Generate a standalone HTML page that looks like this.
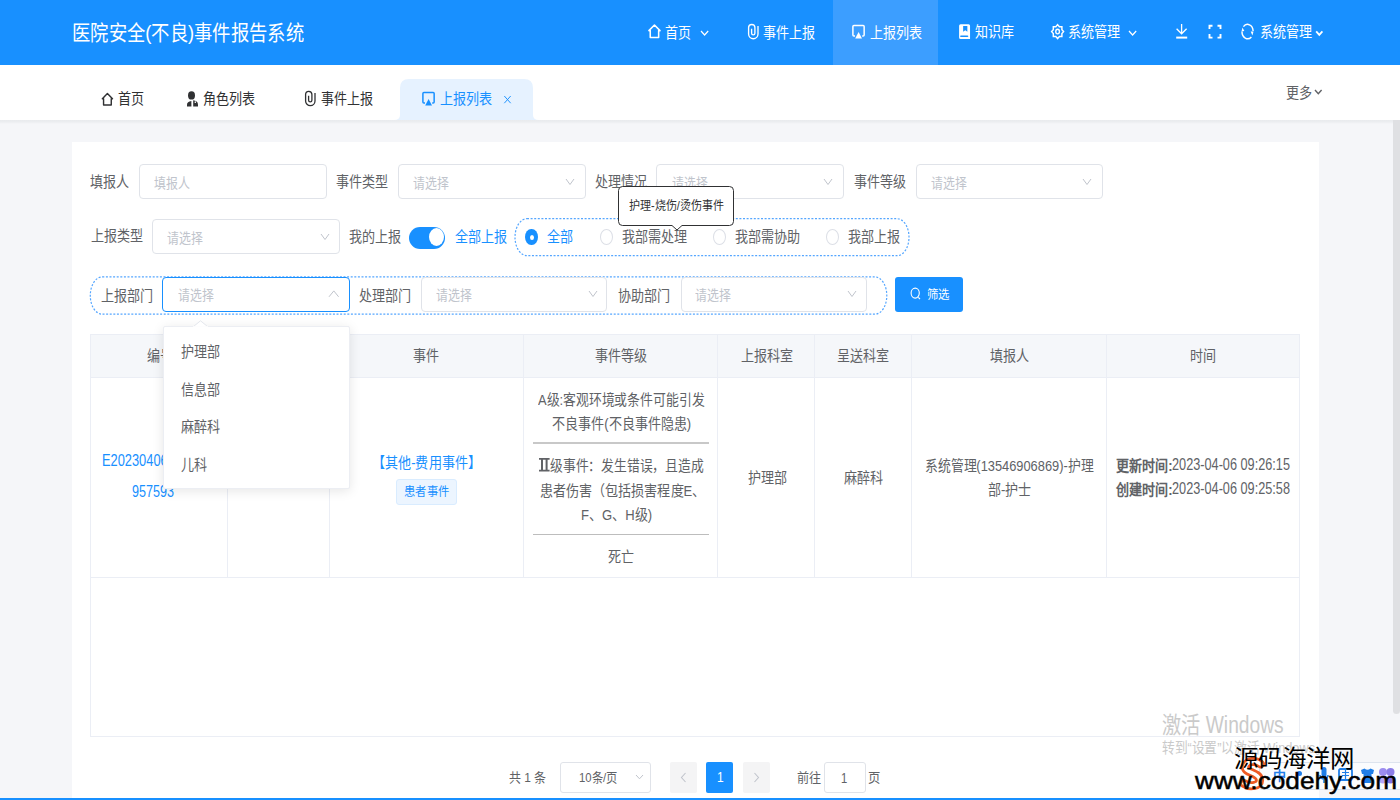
<!DOCTYPE html>
<html lang="zh-CN"><head><meta charset="utf-8">
<style>
*{box-sizing:border-box}
html,body{margin:0;padding:0}
body{width:1400px;height:800px;overflow:hidden;position:relative;background:#f5f6f9;font-family:"Liberation Sans",sans-serif}
.a{position:absolute}
.t{position:absolute;white-space:nowrap;transform:scaleX(.87);transform-origin:0 0;line-height:1;font-size:15px;color:#606266}
.l{position:absolute;white-space:nowrap;transform:scaleX(.8);transform-origin:0 0;line-height:1;font-size:15.5px;color:#606266}
.w{color:#fff}
.k{color:#303133}
.ph{color:#c0c4cc;font-size:14px;transform:scaleX(.85)!important}
.inp{position:absolute;background:#fff;border:1px solid #e0e3e9;border-radius:4px}
svg{position:absolute;overflow:visible}
</style></head><body>

<!-- ============ HEADER ============ -->
<div class="a" style="left:0;top:0;width:1400px;height:65px;background:#1890ff"></div>
<div class="a" style="left:833px;top:0;width:105px;height:65px;background:#3c9eff"></div>
<div class="t w" style="left:71.5px;top:22px;font-size:21px;transform:scaleX(.872)">医院安全(不良)事件报告系统</div>

<!-- nav: home -->
<svg style="left:642px;top:20px" width="24" height="24" viewBox="0 0 24 24"><path d="M8.25 17.5V10.6H6.9L12.45 5L18 10.6H16.65V17.5Z" fill="none" stroke="#fff" stroke-width="1.55" stroke-linejoin="round"/></svg>
<div class="t w" style="left:665px;top:25px">首页</div>
<svg style="left:699.5px;top:30.2px" width="10" height="7" viewBox="0 0 10 7"><path d="M1 1L4.6 5L8.2 1" fill="none" stroke="#fff" stroke-width="1.2"/></svg>
<svg style="left:742px;top:20px" width="24" height="24" viewBox="0 0 24 24"><path d="M16 6V14A4.7 4.7 0 0 1 6.6 14V7.6A3.15 3.15 0 0 1 12.9 7.6V13.2A1.65 1.65 0 0 1 9.6 13.2V8.7" fill="none" stroke="#fff" stroke-width="1.35"/></svg>
<div class="t w" style="left:763px;top:25px">事件上报</div>
<svg style="left:846px;top:20px" width="24" height="24" viewBox="0 0 24 24"><path d="M9 15.95H7.9A1 1 0 0 1 6.9 14.95V6.55A1 1 0 0 1 7.9 5.55H17.15A1 1 0 0 1 18.15 6.55V14.95A1 1 0 0 1 17.15 15.95H16.2" fill="none" stroke="#fff" stroke-width="1.5"/><path d="M12.6 12.1L16 18.4H9.2Z" fill="#fff"/></svg>
<div class="t w" style="left:869.5px;top:25px">上报列表</div>
<svg style="left:954px;top:20px" width="24" height="24" viewBox="0 0 24 24"><path d="M6.6 4.2H14.55A1.5 1.5 0 0 1 16.05 5.7V19.05H6.6A1.5 1.5 0 0 1 5.1 17.55V5.7A1.5 1.5 0 0 1 6.6 4.2Z" fill="#fff"/><path d="M9.15 5.9H13.35V11.7L11.25 10.3L9.15 11.7Z" fill="#1890ff"/><path d="M6.9 16.2H13.5" stroke="#1890ff" stroke-width="1.6" stroke-linecap="round"/></svg>
<div class="t w" style="left:974.5px;top:24px">知识库</div>
<svg style="left:1045px;top:20px" width="24" height="24" viewBox="0 0 24 24"><path d="M12.60 4.60 L14.36 6.65 L16.90 6.65 L16.90 9.62 L18.60 11.60 L16.90 13.58 L16.90 16.55 L14.36 16.55 L12.60 18.60 L10.84 16.55 L8.30 16.55 L8.30 13.58 L6.60 11.60 L8.30 9.62 L8.30 6.65 L10.84 6.65Z" fill="none" stroke="#fff" stroke-width="1.45" stroke-linejoin="miter"/><ellipse cx="12.6" cy="11.6" rx="1.85" ry="2.3" fill="none" stroke="#fff" stroke-width="1.4"/></svg>
<div class="t w" style="left:1068px;top:24px;transform:scaleX(.875)">系统管理</div>
<svg style="left:1128px;top:30px" width="10" height="7" viewBox="0 0 10 7"><path d="M1 1L4.6 5L8.2 1" fill="none" stroke="#fff" stroke-width="1.2"/></svg>
<svg style="left:1170px;top:20px" width="24" height="24" viewBox="0 0 24 24"><path d="M11.6 4V14M6.6 8.8L11.6 13.8L16.6 8.8" fill="none" stroke="#fff" stroke-width="1.3"/><path d="M6.2 17.6H17.2" stroke="#fff" stroke-width="2"/></svg>
<svg style="left:1197.5px;top:20px" width="24" height="24" viewBox="0 0 24 24"><path d="M39 9V5.8H42M47 5.8H50V9M50 14V17.6H47M42 17.6H39V14" fill="none" stroke="#fff" stroke-width="1.9" transform="translate(-27.5,0)"/></svg>
<svg style="left:1236px;top:20px" width="24" height="24" viewBox="0 0 24 24"><path d="M7.4 6.6A5.6 6.9 0 0 1 17.1 11" fill="none" stroke="#fff" stroke-width="1.45"/><path d="M15.4 16.9A5.6 6.9 0 0 1 6 11.6" fill="none" stroke="#fff" stroke-width="1.45"/><path d="M14.7 11.6L17.5 11.4L16.4 15.4Z" fill="#fff"/><path d="M5.5 11.5L8.3 11.1L6.5 7.5Z" fill="#fff"/></svg>
<div class="t w" style="left:1260px;top:24px">系统管理</div>
<svg style="left:1314.5px;top:29.5px" width="10" height="7" viewBox="0 0 10 7"><path d="M1.2 1.3L4.3 4.8L7.4 1.3" fill="none" stroke="#fff" stroke-width="1.8"/></svg>
<!-- ============ TAB BAR ============ -->
<div class="a" style="left:0;top:65px;width:1400px;height:55px;background:#fff"></div>
<div class="a" style="left:0;top:120px;width:1393px;height:4px;background:linear-gradient(#e9ebee,#eceef1 50%,#f5f6f9)"></div>
<svg style="left:95.5px;top:88.5px" width="22" height="22" viewBox="0 0 24 24"><path d="M8.25 17.5V10.6H6.9L12.45 5L18 10.6H16.65V17.5Z" fill="none" stroke="#303133" stroke-width="1.55" stroke-linejoin="round"/></svg>
<div class="t k" style="left:118px;top:91px">首页</div>
<svg style="left:180px;top:87px" width="24" height="24" viewBox="0 0 24 24"><ellipse cx="11.5" cy="8.4" rx="3.5" ry="4.2" fill="#303133"/><path d="M7 19.5V17.5C7 15.5 8.5 14.2 11.4 13.9V19.5Z" fill="#303133"/><path d="M13.2 13.3C16 13.6 18 15.2 18 17.5V19.5H13.2Z" fill="#303133"/><ellipse cx="15.3" cy="15.2" rx="0.7" ry="0.9" fill="#fff"/></svg>
<div class="t k" style="left:203px;top:91px">角色列表</div>
<svg style="left:299px;top:87.4px" width="24" height="24" viewBox="0 0 24 24"><path d="M16 6V14A4.7 4.7 0 0 1 6.6 14V7.6A3.15 3.15 0 0 1 12.9 7.6V13.2A1.65 1.65 0 0 1 9.6 13.2V8.7" fill="none" stroke="#303133" stroke-width="1.3"/></svg>
<div class="t k" style="left:321px;top:91px">事件上报</div>
<!-- active tab -->
<svg style="left:394px;top:79px" width="146" height="41" viewBox="0 0 146 41"><path d="M0 41Q6 41 6 36V9Q6 0 15 0H130Q139 0 139 9V36Q139 41 145 41Z" fill="#e6f2ff"/></svg>
<svg style="left:416.2px;top:87.3px" width="24" height="24" viewBox="0 0 24 24"><path d="M9 15.95H7.9A1 1 0 0 1 6.9 14.95V6.55A1 1 0 0 1 7.9 5.55H17.15A1 1 0 0 1 18.15 6.55V14.95A1 1 0 0 1 17.15 15.95H16.2" fill="none" stroke="#1890ff" stroke-width="1.5"/><path d="M12.6 12.1L16 18.4H9.2Z" fill="#1890ff"/></svg>
<div class="t" style="left:440px;top:91px;color:#1890ff">上报列表</div>
<svg style="left:503px;top:95px" width="9" height="9" viewBox="0 0 9 9"><path d="M1.3 1L7.7 8.2M7.7 1L1.3 8.2" stroke="#1890ff" stroke-width="0.95"/></svg>
<div class="t" style="left:1286px;top:85px">更多</div>
<svg style="left:1314px;top:89px" width="9" height="7" viewBox="0 0 9 7"><path d="M1 1L4.3 4.8L7.6 1" fill="none" stroke="#606266" stroke-width="1.4"/></svg>

<!-- scrollbar -->
<div class="a" style="left:1393px;top:120px;width:7px;height:594px;background:#dfe0e3;border-radius:0 0 4px 4px"></div>

<!-- ============ CARD ============ -->
<div class="a" style="left:72px;top:142px;width:1247px;height:656px;background:#fff"></div>

<!-- FORM_START -->
<div class="t" style="left:90px;top:174px">填报人</div>
<div class="inp" style="left:139px;top:164px;width:188px;height:35px"></div>
<div class="t ph" style="left:154px;top:175.5px">填报人</div>

<div class="t" style="left:336px;top:174px">事件类型</div>
<div class="inp" style="left:398px;top:164px;width:188px;height:35px"></div>
<div class="t ph" style="left:413px;top:175.5px">请选择</div>
<svg style="left:565px;top:177.5px" width="10" height="8" viewBox="0 0 10 8"><path d="M1 1L5 6.5L9 1" fill="none" stroke="#c0c4cc" stroke-width="1"/></svg>

<div class="t" style="left:595px;top:174px">处理情况</div>
<div class="inp" style="left:656px;top:164px;width:188px;height:35px"></div>
<div class="t ph" style="left:671.5px;top:175.5px">请选择</div>
<svg style="left:823px;top:177.5px" width="10" height="8" viewBox="0 0 10 8"><path d="M1 1L5 6.5L9 1" fill="none" stroke="#c0c4cc" stroke-width="1"/></svg>

<div class="t" style="left:853.5px;top:174px">事件等级</div>
<div class="inp" style="left:916px;top:164px;width:187px;height:35px"></div>
<div class="t ph" style="left:931px;top:175.5px">请选择</div>
<svg style="left:1082px;top:177.5px" width="10" height="8" viewBox="0 0 10 8"><path d="M1 1L5 6.5L9 1" fill="none" stroke="#c0c4cc" stroke-width="1"/></svg>

<div class="t" style="left:91px;top:228px">上报类型</div>
<div class="inp" style="left:152px;top:219px;width:188px;height:35px"></div>
<div class="t ph" style="left:167px;top:230.5px">请选择</div>
<svg style="left:320px;top:232.5px" width="10" height="8" viewBox="0 0 10 8"><path d="M1 1L5 6.5L9 1" fill="none" stroke="#c0c4cc" stroke-width="1"/></svg>

<div class="t" style="left:349px;top:229px">我的上报</div>
<div class="a" style="left:409px;top:226.5px;width:36px;height:22px;border-radius:11px;background:#1890ff"></div>
<div class="a" style="left:429px;top:228px;width:15px;height:18px;border-radius:50%;background:#fff"></div>
<div class="t" style="left:455px;top:229px;color:#1890ff">全部上报</div>
<svg style="left:514px;top:218px" width="396" height="39" viewBox="0 0 396 39"><rect x="1" y="0.7" width="394" height="37" rx="12" ry="18.5" fill="none" stroke="#55a6ff" stroke-width="1.2" stroke-dasharray="2 1.6"/></svg>
<div class="a" style="left:525px;top:229px;width:12.5px;height:16px;border-radius:50%;background:#1890ff"></div>
<div class="a" style="left:529.5px;top:234.5px;width:4px;height:5px;border-radius:50%;background:#fff"></div>
<div class="t" style="left:547px;top:229px;color:#1890ff">全部</div>
<div class="a" style="left:599.5px;top:229px;width:13px;height:16px;border-radius:50%;border:1px solid #dcdfe6;background:#fff"></div>
<div class="t" style="left:622px;top:229px">我部需处理</div>
<div class="a" style="left:713px;top:229px;width:13px;height:16px;border-radius:50%;border:1px solid #dcdfe6;background:#fff"></div>
<div class="t" style="left:735px;top:229px">我部需协助</div>
<div class="a" style="left:825.5px;top:229px;width:13px;height:16px;border-radius:50%;border:1px solid #dcdfe6;background:#fff"></div>
<div class="t" style="left:848px;top:229px">我部上报</div>
<svg style="left:89px;top:275.5px" width="799" height="39" viewBox="0 0 799 39"><rect x="1.3" y="0.9" width="796.5" height="37.3" rx="12" ry="18.6" fill="none" stroke="#55a6ff" stroke-width="1.2" stroke-dasharray="2 1.6"/></svg>
<div class="t" style="left:101px;top:288px">上报部门</div>
<div class="inp" style="left:162px;top:277px;width:188px;height:34.5px;border-color:#1890ff"></div>
<div class="t ph" style="left:177.5px;top:288.3px">请选择</div>
<svg style="left:328.3px;top:290.3px" width="12" height="8" viewBox="0 0 12 8"><path d="M1 6.8L5.8 0.9L10.6 6.8" fill="none" stroke="#c0c4cc" stroke-width="1"/></svg>

<div class="t" style="left:359px;top:288px">处理部门</div>
<div class="inp" style="left:421px;top:277px;width:186px;height:34.5px"></div>
<div class="t ph" style="left:436px;top:288.3px">请选择</div>
<svg style="left:588px;top:290.3px" width="10" height="8" viewBox="0 0 10 8"><path d="M1 1L5 6.5L9 1" fill="none" stroke="#c0c4cc" stroke-width="1"/></svg>

<div class="t" style="left:617.5px;top:288px">协助部门</div>
<div class="inp" style="left:680.5px;top:277px;width:186.0px;height:34.5px"></div>
<div class="t ph" style="left:694.5px;top:288.3px">请选择</div>
<svg style="left:846.5px;top:290.3px" width="10" height="8" viewBox="0 0 10 8"><path d="M1 1L5 6.5L9 1" fill="none" stroke="#c0c4cc" stroke-width="1"/></svg>

<div class="a" style="left:895px;top:276.5px;width:68px;height:35px;border-radius:3px;background:#1890ff"></div>
<svg style="left:910px;top:287px" width="11" height="13" viewBox="0 0 11 13"><ellipse cx="5.2" cy="6.1" rx="4.1" ry="5" fill="none" stroke="#fff" stroke-width="1.1"/><path d="M8.3 10.3L10 12" stroke="#fff" stroke-width="1.1"/></svg>
<div class="t w" style="left:926.8px;top:289px;font-size:12px;transform:scaleX(.95)">筛选</div>
<svg style="left:618px;top:186px" width="116" height="45" viewBox="0 0 116 45"><path d="M4.5 0.5H111.5A4 4 0 0 1 115.5 4.5V35.5A4 4 0 0 1 111.5 39.5H64L59 44L54 39.5H4.5A4 4 0 0 1 0.5 35.5V4.5A4 4 0 0 1 4.5 0.5Z" fill="#fff" stroke="#303133" stroke-width="1"/></svg>
<div class="t k" style="left:629px;top:199.5px;font-size:12px;transform:scaleX(.92)">护理-烧伤/烫伤事件</div>
<!-- FORM_END -->

<!-- TABLE_START -->
<div class="a" style="left:90px;top:334px;width:1210px;height:403px;border:1px solid #ebeef5;background:#fff"></div>
<div class="a" style="left:91px;top:335px;width:1208px;height:43px;background:#f5f7fa"></div>
<div class="a" style="left:91px;top:377px;width:1208px;height:1px;background:#ebeef5"></div>
<div class="a" style="left:91px;top:577px;width:1208px;height:1px;background:#ebeef5"></div>
<div class="a" style="left:227px;top:335px;width:1px;height:242px;background:#ebeef5"></div>
<div class="a" style="left:329px;top:335px;width:1px;height:242px;background:#ebeef5"></div>
<div class="a" style="left:523px;top:335px;width:1px;height:242px;background:#ebeef5"></div>
<div class="a" style="left:717px;top:335px;width:1px;height:242px;background:#ebeef5"></div>
<div class="a" style="left:814px;top:335px;width:1px;height:242px;background:#ebeef5"></div>
<div class="a" style="left:911px;top:335px;width:1px;height:242px;background:#ebeef5"></div>
<div class="a" style="left:1106px;top:335px;width:1px;height:242px;background:#ebeef5"></div>
<div class="t" style="left:146.5px;top:348px">编号</div>
<div class="t" style="left:412.5px;top:348px">事件</div>
<div class="t" style="left:594.5px;top:348px">事件等级</div>
<div class="t" style="left:741px;top:348px">上报科室</div>
<div class="t" style="left:837px;top:348px">呈送科室</div>
<div class="t" style="left:989.5px;top:348px">填报人</div>
<div class="t" style="left:1190px;top:348px">时间</div>
<div class="l" style="left:101.5px;top:451.5px;color:#1890ff;font-size:17px;transform:scaleX(.755)">E2023040609255</div>
<div class="l" style="left:132px;top:483px;color:#1890ff;font-size:17px;transform:scaleX(.74)">957593</div>
<div class="t" style="left:371.5px;top:455px;color:#1890ff">【其他-费用事件】</div>
<div class="a" style="left:396px;top:478.5px;width:60.5px;height:26px;border-radius:3px;background:#ecf5ff;border:1px solid #d9ecff"></div>
<div class="t" style="left:403.5px;top:486px;font-size:12px;color:#1890ff;transform:scaleX(.94)">患者事件</div>
<div class="t" style="left:538px;top:391.5px;transform:scaleX(.857)">A级:客观环境或条件可能引发</div>
<div class="t" style="left:552px;top:416px">不良事件(不良事件隐患)</div>
<div class="a" style="left:533px;top:442px;width:175.5px;height:2px;background:#c8c8c8"></div>
<svg style="left:539px;top:458px" width="11" height="14" viewBox="0 0 11 14"><path d="M0 0.9H10.6M0 12.6H10.6" stroke="#606266" stroke-width="1.6"/><path d="M3 1V12.5M7.6 1V12.5" stroke="#606266" stroke-width="2"/></svg><div class="t" style="left:549.5px;top:457.5px;transform:scaleX(.853)">级事件：发生错误，且造成</div>
<div class="t" style="left:539.5px;top:482.5px">患者伤害（包括损害程度E、</div>
<div class="t" style="left:581px;top:507px">F、G、H级)</div>
<div class="a" style="left:533px;top:534px;width:175.5px;height:1px;background:#bdbdbd"></div>
<div class="t" style="left:607.5px;top:549px">死亡</div>
<div class="t" style="left:747.5px;top:469.5px">护理部</div>
<div class="t" style="left:843.5px;top:469.5px">麻醉科</div>
<div class="t" style="left:925px;top:457.5px;transform:scaleX(.856)">系统管理(13546906869)-护理</div>
<div class="t" style="left:987.5px;top:481.5px">部-护士</div>
<div class="t" style="left:1116px;top:457.5px;font-weight:bold">更新时间:</div><div class="l" style="left:1171.5px;top:456px;font-size:16.5px;transform:scaleX(.77)">2023-04-06 09:26:15</div>
<div class="t" style="left:1116px;top:481.5px;font-weight:bold">创建时间:</div><div class="l" style="left:1171.5px;top:480.2px;font-size:16.5px;transform:scaleX(.77)">2023-04-06 09:25:58</div>
<div class="a" style="left:162.5px;top:325.5px;width:187px;height:163.5px;background:#fff;border:1px solid #eceef3;border-radius:2px;box-shadow:0 2px 12px rgba(0,0,0,.1)"></div>
<svg style="left:193px;top:320px" width="15" height="7" viewBox="0 0 15 7"><path d="M0.5 6.5L7.5 0.8L14.5 6.5" fill="#fff" stroke="#e4e7ed" stroke-width="1"/><path d="M0 7H15" stroke="#fff" stroke-width="1.5"/></svg>
<div class="t" style="left:181px;top:344px">护理部</div>
<div class="t" style="left:181px;top:382px">信息部</div>
<div class="t" style="left:181px;top:419px">麻醉科</div>
<div class="t" style="left:181px;top:456.5px">儿科</div>
<div class="t" style="left:508.5px;top:771px;font-size:13px;transform:scaleX(.92)">共 1 条</div>
<div class="inp" style="left:560px;top:762px;width:91px;height:31px;border-radius:3px"></div>
<div class="t" style="left:578.5px;top:771px;font-size:13px">10条/页</div>
<svg style="left:635px;top:774px" width="9" height="6" viewBox="0 0 9 6"><path d="M1 1L4.5 4.8L8 1" fill="none" stroke="#c0c4cc" stroke-width="1"/></svg>
<div class="a" style="left:670px;top:762px;width:27px;height:31px;border-radius:2px;background:#f4f4f5"></div>
<svg style="left:680px;top:772px" width="7" height="11" viewBox="0 0 7 11"><path d="M5.5 1L1.5 5.5L5.5 10" fill="none" stroke="#c0c4cc" stroke-width="1.1"/></svg>
<div class="a" style="left:706px;top:762px;width:27px;height:31px;border-radius:2px;background:#1890ff"></div>
<div class="l w" style="left:716.5px;top:768.5px;font-size:15px">1</div>
<div class="a" style="left:743px;top:762px;width:27px;height:31px;border-radius:2px;background:#f4f4f5"></div>
<svg style="left:753px;top:772px" width="7" height="11" viewBox="0 0 7 11"><path d="M1.5 1L5.5 5.5L1.5 10" fill="none" stroke="#c0c4cc" stroke-width="1.1"/></svg>
<div class="t" style="left:796.5px;top:771px;font-size:13px;transform:scaleX(.93)">前往</div>
<div class="inp" style="left:823.5px;top:762px;width:42px;height:31px;border-radius:3px"></div>
<div class="l" style="left:841px;top:771px;font-size:14px">1</div>
<div class="t" style="left:867.5px;top:771px;font-size:13px;transform:scaleX(.95)">页</div>
<!-- TABLE_END -->

<!-- OVERLAY_START -->
<div class="a" style="left:1161.5px;top:713.5px;font-size:23px;line-height:1;color:#cacaca;white-space:nowrap;transform:scaleX(.835);transform-origin:0 0">激活 Windows</div>
<div class="a" style="left:1161.5px;top:740px;font-size:15px;line-height:1;color:#cacaca;white-space:nowrap;transform:scaleX(.85);transform-origin:0 0">转到“设置”以激活 Windows。</div>
<div class="a" style="left:1259px;top:762px;width:145px;height:27.5px;background:#fbfcfe;border:1px solid #dde4ee;border-radius:3px"></div>
<svg style="left:1238px;top:756px" width="30" height="36" viewBox="0 0 30 36"><path d="M22.5 8C18 4 9 4.5 7.5 10.5C6 17 20.5 16 21.5 23.5C22.5 30 12 31.5 6 27.5" fill="none" stroke="#ee5a24" stroke-width="9" stroke-linecap="round"/><path d="M22.5 8C18 4 9 4.5 7.5 10.5C6 17 20.5 16 21.5 23.5C22.5 30 12 31.5 6 27.5" fill="none" stroke="#fff" stroke-width="3.5" stroke-linecap="round"/></svg>
<div class="a" style="left:1273px;top:768.5px;font-size:13px;line-height:1;color:#1f7ee8;font-weight:bold">中</div>
<div class="a" style="left:1297px;top:771px;width:5px;height:5px;border-radius:50%;background:#1f7ee8"></div>
<svg style="left:1318px;top:766px" width="12" height="20" viewBox="0 0 12 20"><rect x="3.5" y="1" width="5" height="10" rx="2.5" fill="#1f7ee8"/><path d="M2 9A4 4 0 0 0 10 9M6 13V17" fill="none" stroke="#1f7ee8" stroke-width="1.6"/></svg>
<svg style="left:1338px;top:768px" width="15" height="14" viewBox="0 0 15 14"><rect x="1" y="1" width="13" height="11" rx="1.5" fill="none" stroke="#1f7ee8" stroke-width="1.8"/><path d="M4 4.5H11M4 7.5H11M7.5 2V11" stroke="#1f7ee8" stroke-width="1.2"/></svg>
<svg style="left:1360px;top:768px" width="15" height="16" viewBox="0 0 15 16"><path d="M1 2L4.5 0.5Q7.5 3 10.5 0.5L14 2L13 6H11.5V15H3.5V6H2Z" fill="#1f7ee8"/></svg>
<svg style="left:1377px;top:767px" width="19" height="18" viewBox="0 0 19 18"><circle cx="6" cy="5" r="4" fill="#9d8df0"/><circle cx="13.5" cy="5" r="4" fill="#8c7ee8"/><circle cx="6" cy="12.5" r="4" fill="#b7a6f5"/><circle cx="13.5" cy="12.5" r="4" fill="#7f70e0"/></svg>
<div class="a" style="left:1233.5px;top:748.3px;font-size:23.5px;line-height:1;color:#000;white-space:nowrap;transform:scaleX(1.04);transform-origin:0 0">源码海洋网</div>
<div class="a" style="left:1195px;top:766px;font-size:24.5px;line-height:1.2;color:#000;white-space:nowrap;transform:scaleX(1.07);transform-origin:0 0;-webkit-text-stroke:0.5px #000">www.codehy.com</div>
<!-- OVERLAY_END -->
<!-- bottom blue line -->
<div class="a" style="left:0;top:798px;width:1400px;height:2px;background:#1890ff"></div>
</body></html>
